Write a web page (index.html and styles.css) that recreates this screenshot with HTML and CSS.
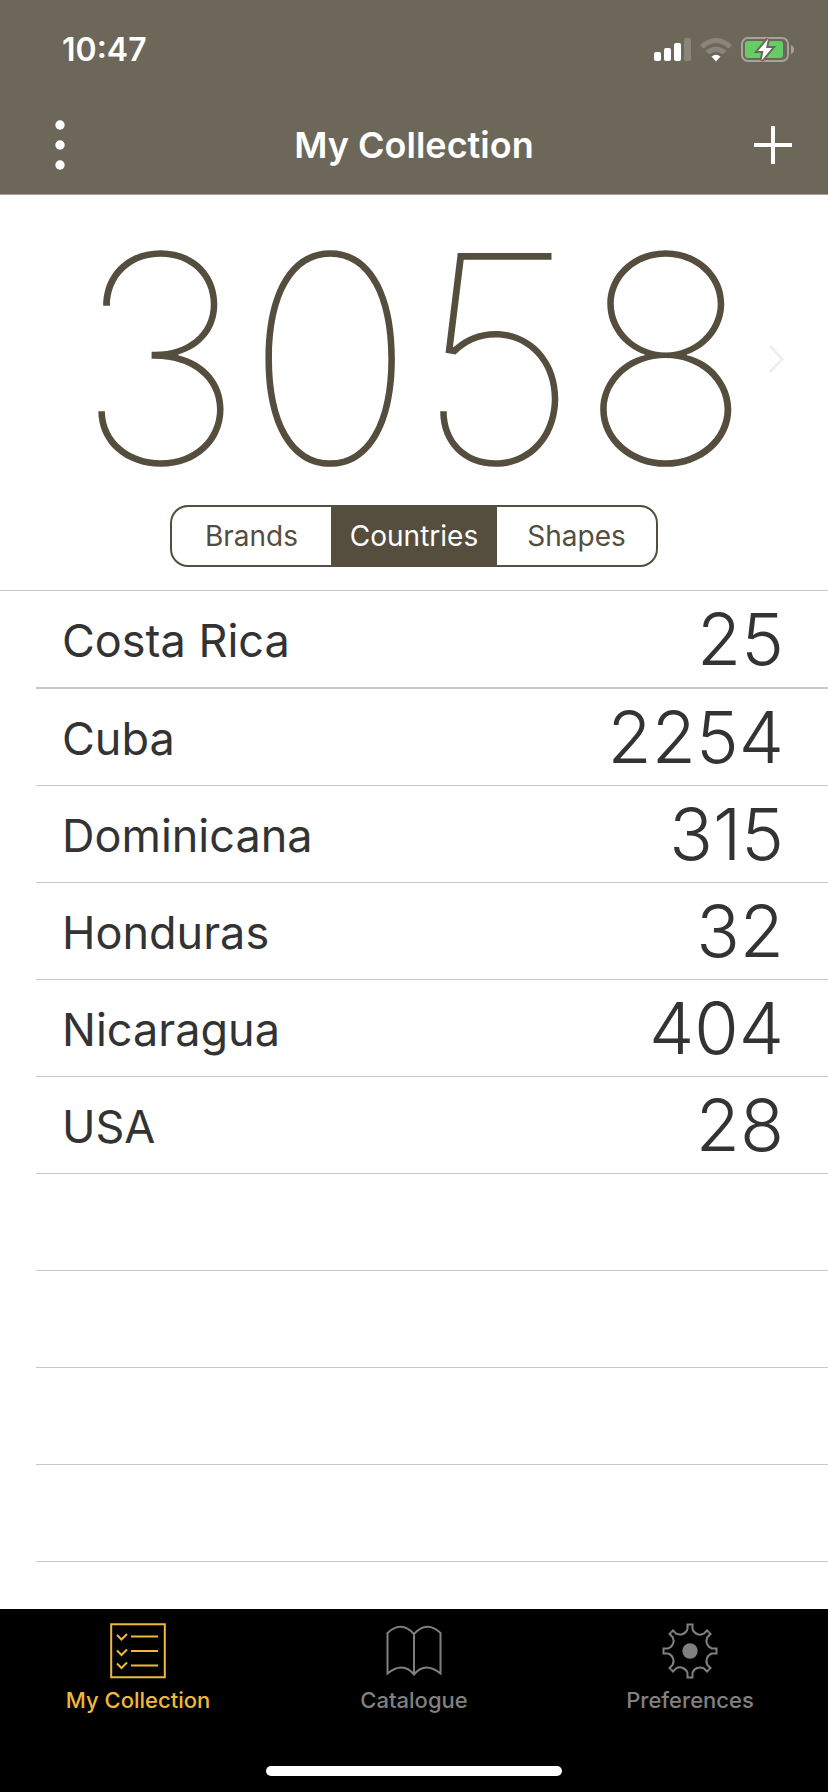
FILE: index.html
```html
<!DOCTYPE html>
<html lang="en">
<head>
<meta charset="utf-8">
<meta name="viewport" content="width=device-width, initial-scale=1">
<title>My Collection</title>
<link rel="stylesheet" href="styles.css">
</head>
<body>
<div class="app">
  <header class="header">
    <div class="status">
      <time class="status-time">10:47</time>
      <div class="status-icons">
        <svg class="signal" viewBox="0 0 37 24" aria-hidden="true">
          <rect x="0" y="14" width="7" height="9" rx="2"/>
          <rect x="10" y="10" width="7" height="13" rx="2"/>
          <rect x="20" y="5" width="7" height="18" rx="2"/>
          <rect class="faint" x="30" y="0" width="7" height="23" rx="2"/>
        </svg>
        <svg class="wifi" viewBox="0 0 32 24" aria-hidden="true">
          <path class="faint" d="M0 7Q16 -7 32 7L28.500 10.500Q16 0 3.500 10.500Z"/>
          <path class="faint" d="M5.500 13Q16 4 26.500 13L22.500 16.500Q16 11 9.500 16.500Z"/>
          <path d="M11.500 18.500Q16 15 20.500 18.500L16 23.500Z"/>
        </svg>
        <svg class="battery" viewBox="0 0 54 26" aria-hidden="true">
          <rect class="shell" x="1" y="1" width="46" height="23" rx="6"/>
          <rect class="charge" x="4" y="4" width="38" height="17" rx="3"/>
          <path class="nub" d="M50 8Q53 9 53 12.500Q53 16 50 17Z"/>
          <path class="bolt" d="M27 2L17 14H22.500L20.500 23.500L31 11H25Z"/>
        </svg>
      </div>
    </div>
    <nav class="navbar" aria-label="Collection actions">
      <button class="icon-button" type="button" aria-label="More">
        <svg class="dots" viewBox="0 0 10 50"><circle cx="5" cy="5" r="4.700"/><circle cx="5" cy="25" r="4.700"/><circle cx="5" cy="45" r="4.700"/></svg>
      </button>
      <h1 class="title">My Collection</h1>
      <button class="icon-button icon-button-end" type="button" aria-label="Add">
        <svg class="plus" viewBox="0 0 38 38"><path d="M19 0V38M0 19H38"/></svg>
      </button>
    </nav>
  </header>

  <main class="content">
    <section class="summary">
      <a class="total" href="#all">
        <span class="total-value">3058</span>
        <svg class="chevron" viewBox="0 0 16 28" aria-hidden="true"><path d="M2 1L14 14L2 27"/></svg>
      </a>
      <div class="segments" role="group" aria-label="Group by">
        <button class="segment" type="button" aria-pressed="false">Brands</button>
        <button class="segment segment-active" type="button" aria-pressed="true">Countries</button>
        <button class="segment" type="button" aria-pressed="false">Shapes</button>
      </div>
    </section>

    <div class="list">
      <table class="countries">
        <tbody>
          <tr class="selected"><th scope="row">Costa Rica</th><td>25</td></tr>
          <tr><th scope="row">Cuba</th><td>2254</td></tr>
          <tr><th scope="row">Dominicana</th><td>315</td></tr>
          <tr><th scope="row">Honduras</th><td>32</td></tr>
          <tr><th scope="row">Nicaragua</th><td>404</td></tr>
          <tr><th scope="row">USA</th><td>28</td></tr>
          <tr><td colspan="2"></td></tr>
          <tr><td colspan="2"></td></tr>
          <tr><td colspan="2"></td></tr>
          <tr><td colspan="2"></td></tr>
        </tbody>
      </table>
    </div>
  </main>

  <footer class="tabbar">
    <nav class="tabs" aria-label="Main">
      <a class="tab tab-active" href="#collection" aria-current="page">
        <svg class="tab-icon" viewBox="0 0 56 56" aria-hidden="true">
          <path d="M1.200 1.200H54.800V54.300H1.200Z"/>
          <path d="M21 13.500H48M21 28H48M21 42.500H48"/>
          <path d="M7 12L11.500 16.500L17 11M7 27.500L11.500 32L17 26.500M7 40.500L11.500 45L17 39.500"/>
        </svg>
        <span>My Collection</span>
      </a>
      <a class="tab" href="#catalogue">
        <svg class="tab-icon" viewBox="0 0 56 56" aria-hidden="true">
          <path d="M28 11Q15 -3 1.500 10V50.500Q17 38 28 51.500Q39 38 54.500 50.500V10Q41 -3 28 11ZM28 11V52"/>
        </svg>
        <span>Catalogue</span>
      </a>
      <a class="tab" href="#preferences">
        <svg class="tab-icon" viewBox="-28 -28 56 56" aria-hidden="true">
          <defs><path id="tooth" d="M0 -26.500H2.500V-22A8 8 0 0 0 13.800 -17.300L17 -20.500L18.700 -18.700"/></defs>
          <use href="#tooth"/>
          <use href="#tooth" transform="rotate(45)"/>
          <use href="#tooth" transform="rotate(90)"/>
          <use href="#tooth" transform="rotate(135)"/>
          <use href="#tooth" transform="rotate(180)"/>
          <use href="#tooth" transform="rotate(225)"/>
          <use href="#tooth" transform="rotate(270)"/>
          <use href="#tooth" transform="rotate(315)"/>
          <circle class="hub" r="7.700"/>
        </svg>
        <span>Preferences</span>
      </a>
    </nav>
    <div class="home-indicator"></div>
  </footer>
</div>
</body>
</html>
```
FILE: styles.css
```css
* { box-sizing: border-box; }

body {
  margin: 0;
  background: #fff;
  color: #333;
  font-family: Inter, Roboto, "Liberation Sans", sans-serif;
}

button { margin: 0; padding: 0; border: 0; background: none; color: inherit; font: inherit; }
a { color: inherit; text-decoration: none; }
svg { display: block; }

.app { display: flex; flex-direction: column; min-height: 100vh; }

/* Header */
.header { background: #6d675a; color: #fff; border-bottom: 1px solid #a7a39c; }
.status { display: flex; justify-content: space-between; align-items: center; height: 98px; padding: 2px 33px 0 62px; }
.status-time { font-size: 32px; line-height: 40px; font-weight: 600; }
.status-icons { display: flex; align-items: center; gap: 9px; }
.status-icons svg { fill: #fff; }
.signal { width: 37px; height: 24px; }
.wifi { width: 32px; height: 24px; }
.battery { width: 54px; height: 26px; }
.status-icons .faint { fill: #8a8579; }
.status-icons .shell { fill: none; stroke: #a7a39b; stroke-width: 2; }
.status-icons .charge { fill: #65cd66; }
.status-icons .nub { fill: #a7a39b; }
.status-icons .bolt { stroke: #6d675a; stroke-width: 4; paint-order: stroke; }

.navbar { display: grid; grid-template-columns: 1fr auto 1fr; align-items: center; height: 96px; padding: 0 36px 2px; }
.icon-button { display: flex; align-items: center; justify-content: center; height: 88px; min-width: 48px; justify-self: start; }
.icon-button-end { justify-content: flex-end; justify-self: end; }
.dots { width: 10px; height: 50px; fill: #fff; }
.plus { width: 38px; height: 38px; stroke: #fff; stroke-width: 4; }
.title { margin: 0; font-size: 36px; line-height: 44px; font-weight: 600; }

/* Summary */
.content { flex: 1; }
.summary { display: flex; flex-direction: column; align-items: center; padding: 18px 44px 23px; border-bottom: 1px solid #c8c8c8; color: #554d3d; }
.total { display: grid; grid-template-columns: 1fr auto 1fr; align-items: center; align-self: stretch; }
.total-value { grid-column: 2; font-size: 290px; line-height: 292px; font-weight: 140; }
.chevron { width: 16px; height: 28px; justify-self: end; fill: none; stroke: #efefef; stroke-width: 3; }

.segments { display: grid; grid-template-columns: 1fr 166px 1fr; width: 488px; max-width: 100%; height: 62px; border: 2px solid #554d3d; border-radius: 18px; overflow: hidden; }
.segment { font-size: 28px; line-height: 34px; }
.segment-active { background: #554d3d; color: #fff; }

/* Country list */
.list { padding-left: 36px; }
.countries { width: 100%; border-collapse: separate; border-spacing: 0; }
.countries tr { height: 97px; }
.countries .selected { height: 98px; }
.countries th, .countries td { padding: 0; border-bottom: 1px solid #c8c7cc; vertical-align: middle; }
.countries .selected th, .countries .selected td { border-bottom-width: 2px; }
.countries th { padding-top: 3px; padding-left: 26px; text-align: left; font-size: 45px; line-height: 56px; font-weight: 400; }
.countries td { padding-right: 44px; text-align: right; font-size: 72px; line-height: 88px; font-weight: 300; }

/* Tab bar */
.tabbar { display: flex; flex-direction: column; align-items: center; justify-content: space-between; height: 183px; padding: 14px 0 16px; background: #000; }
.tabs { display: grid; grid-template-columns: repeat(3, 1fr); align-self: stretch; }
.tab { display: flex; flex-direction: column; align-items: center; gap: 7px; color: #808080; font-size: 22px; line-height: 28px; font-weight: 500; }
.tab-active { color: #efb83a; }
.tab-icon { width: 56px; height: 56px; fill: none; stroke: currentColor; stroke-width: 2; }
.tab-icon .hub { fill: currentColor; stroke: none; }
.home-indicator { width: 296px; height: 10px; border-radius: 5px; background: #fff; }
```
